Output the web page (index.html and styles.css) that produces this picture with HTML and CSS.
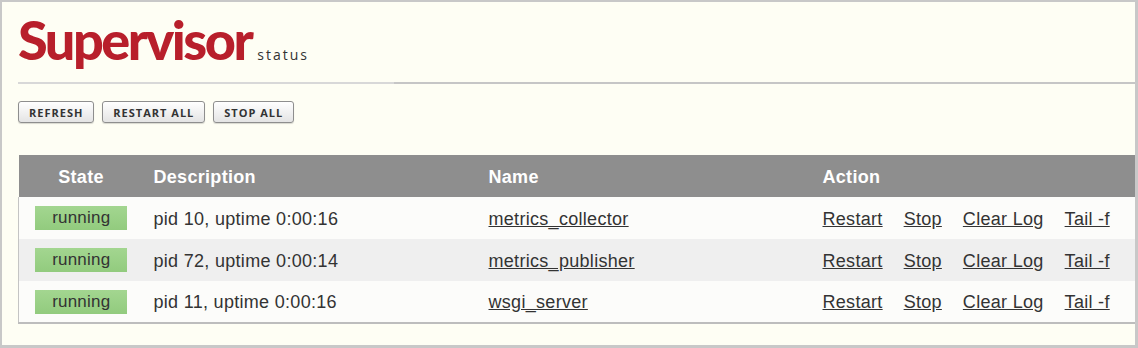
FILE: index.html
```
<!DOCTYPE html>
<html lang="en">
<head>
    <meta charset="UTF-8">
    <meta name="viewport" content="width=device-width, initial-scale=1.0">
    <title>Supervisor Status</title>
    <link rel="stylesheet" href="styles.css">
</head>
<body>
    <div class="frame">
        <div class="masthead">
            <span class="logo">Supervisor</span>
            <span class="subtitle">status</span>
        </div>
        <div class="rule"></div>

        <div class="controls">
            <button class="btn">Refresh</button>
            <button class="btn">Restart All</button>
            <button class="btn">Stop All</button>
        </div>

        <table class="processes">
            <thead>
                <tr>
                    <th class="col-state">State</th>
                    <th class="col-desc">Description</th>
                    <th class="col-name">Name</th>
                    <th class="col-action">Action</th>
                </tr>
            </thead>
            <tbody>
                <tr>
                    <td class="state"><span class="badge">running</span></td>
                    <td>pid 10, uptime 0:00:16</td>
                    <td><a href="#">metrics_collector</a></td>
                    <td>
                        <ul class="actions">
                            <li><a href="#">Restart</a></li>
                            <li><a href="#">Stop</a></li>
                            <li><a href="#">Clear Log</a></li>
                            <li><a href="#">Tail -f</a></li>
                        </ul>
                    </td>
                </tr>
                <tr class="shade">
                    <td class="state"><span class="badge">running</span></td>
                    <td>pid 72, uptime 0:00:14</td>
                    <td><a href="#">metrics_publisher</a></td>
                    <td>
                        <ul class="actions">
                            <li><a href="#">Restart</a></li>
                            <li><a href="#">Stop</a></li>
                            <li><a href="#">Clear Log</a></li>
                            <li><a href="#">Tail -f</a></li>
                        </ul>
                    </td>
                </tr>
                <tr>
                    <td class="state"><span class="badge">running</span></td>
                    <td>pid 11, uptime 0:00:16</td>
                    <td><a href="#">wsgi_server</a></td>
                    <td>
                        <ul class="actions">
                            <li><a href="#">Restart</a></li>
                            <li><a href="#">Stop</a></li>
                            <li><a href="#">Clear Log</a></li>
                            <li><a href="#">Tail -f</a></li>
                        </ul>
                    </td>
                </tr>
            </tbody>
        </table>
    </div>
</body>
</html>
```

FILE: styles.css
```
body {
    margin: 0;
    font-family: "Liberation Sans", Arial, sans-serif;
    background: #fff;
}

.frame {
    height: 348px;
    box-sizing: border-box;
    border-top: 2px solid #c8c8c8;
    border-left: 2px solid #c8c8c8;
    border-right: 3px solid #c8c8c8;
    border-bottom: 3px solid #c8c8c8;
    background: #fefef4;
    padding: 11px 0 0 16px;
    overflow: hidden;
}

.masthead {
    display: flex;
    align-items: baseline;
    height: 54px;
}

.logo {
    font-family: Lato, "Open Sans", sans-serif;
    font-weight: 900;
    font-size: 54px;
    line-height: 54px;
    letter-spacing: -2.5px;
    color: #b81f2b;
}

.subtitle {
    font-family: "Open Sans", sans-serif;
    font-size: 14px;
    letter-spacing: 2px;
    color: #333;
    margin-left: 6px;
}

.rule {
    height: 2px;
    margin-top: 15px;
    background: linear-gradient(to right, #d8d8d8 0, #d8d8d8 376px, #c6c6c6 376px);
}

.controls {
    display: flex;
    gap: 8px;
    margin-top: 17px;
}

.btn {
    height: 22px;
    padding: 0 10px;
    font-family: "Open Sans", sans-serif;
    font-weight: 700;
    font-size: 11px;
    letter-spacing: 1px;
    text-transform: uppercase;
    color: #333;
    border: 1px solid #8e8e8e;
    border-radius: 3px;
    background: linear-gradient(#ffffff, #e4e4e4);
    box-shadow: 0 1px 1px rgba(0, 0, 0, 0.15);
    cursor: pointer;
}

.processes {
    width: 100%;
    margin-top: 32px;
    border-collapse: collapse;
    table-layout: fixed;
    font-size: 18px;
    letter-spacing: 0.3px;
    color: #333;
}

.processes th {
    height: 42px;
    padding: 3px 0 0 10px;
    box-sizing: border-box;
    background: #8e8e8e;
    color: #fff;
    font-weight: bold;
    text-align: left;
}

.processes th.col-state {
    width: 125px;
    padding-left: 0;
    text-align: center;
}

.processes th.col-desc {
    width: 335px;
}

.processes th.col-name {
    width: 334px;
}

.processes td {
    height: 42px;
    padding: 2px 0 0 10px;
    box-sizing: border-box;
    background: #fcfcfa;
    white-space: nowrap;
}

.processes tr.shade td {
    background: #efefef;
}

.processes tbody tr td:first-child {
    border-left: 1px solid #c4c4c4;
}

.processes tbody tr:last-child td {
    border-bottom: 2px solid #bdbdbd;
}

.processes td.state {
    padding: 0;
    text-align: center;
}

.badge {
    display: inline-block;
    width: 92px;
    height: 24px;
    line-height: 24px;
    font-size: 17px;
    letter-spacing: 0.2px;
    background: linear-gradient(#a3d690, #92cb7e);
    color: #333;
}

.processes a {
    color: #333;
    text-decoration: underline;
}

.actions {
    display: flex;
    gap: 21px;
    list-style: none;
    margin: 0;
    padding: 0;
}
```
